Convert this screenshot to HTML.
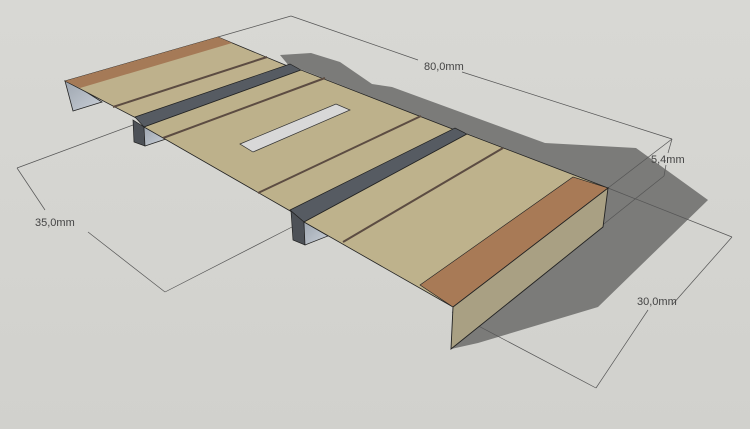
<!DOCTYPE html>
<html><head><meta charset="utf-8"><style>
html,body{margin:0;padding:0;width:750px;height:429px;overflow:hidden;background:#d5d5d1}
text{font-family:"Liberation Sans",sans-serif;font-size:11px;fill:#444}
</style></head><body>
<svg width="750" height="429" viewBox="0 0 750 429" xmlns="http://www.w3.org/2000/svg">
<defs>
<linearGradient id="bg" x1="0" y1="0" x2="0" y2="1"><stop offset="0" stop-color="#d8d8d4"/><stop offset="1" stop-color="#d1d1cd"/></linearGradient>
<linearGradient id="flap" x1="0" y1="0" x2="1" y2="1"><stop offset="0" stop-color="#9ea6b0"/><stop offset="1" stop-color="#c8ced6"/></linearGradient>
</defs>
<rect width="750" height="429" fill="url(#bg)"/>
<polygon fill="#7b7b79" points="280,55 311,53 340,62 372,84 392,87 545,143 636,148 708,200 598,307 478,343 451,349 603,227 608,188 466,133 455,130 300,69 290,67"/>
<g stroke="#555" stroke-width="0.7" fill="none">
<line x1="218" y1="37" x2="291" y2="16"/>
<line x1="291" y1="16" x2="418" y2="60"/><line x1="462" y1="72" x2="672" y2="139"/>
<line x1="608" y1="188" x2="672" y2="139"/>
<line x1="672" y1="139" x2="668" y2="153"/><line x1="666" y1="165" x2="664" y2="176"/>
<line x1="600" y1="227" x2="664" y2="176"/>
<line x1="608" y1="188" x2="732" y2="237"/>
<line x1="732" y1="237" x2="672" y2="305"/><line x1="648" y1="310" x2="596" y2="388"/>
<line x1="452" y1="312" x2="596" y2="388"/>
<line x1="17" y1="168" x2="133" y2="125"/>
<line x1="17" y1="168" x2="45" y2="210"/><line x1="88" y1="232" x2="165" y2="292"/>
<line x1="165" y1="292" x2="292" y2="227"/>
</g>
<text x="424" y="70">80,0mm</text>
<text x="651" y="163">5,4mm</text>
<text x="35" y="226">35,0mm</text>
<text x="637" y="305">30,0mm</text>
<polygon fill="url(#flap)" stroke="#222" stroke-width="0.8" points="65,81 80,88 102,102 73,111"/>
<polygon fill="#beb18c" stroke="#222" stroke-width="0.8" points="65,81 218,37 290,67 138,119"/>
<polygon fill="#a57a57" points="65,81 218,37 232,43 80,88"/>
<line x1="113" y1="107" x2="267" y2="57" stroke="#5c4c42" stroke-width="2"/>
<polygon fill="#565b62" stroke="#222" stroke-width="0.7" points="135,117 290,64 301,70 144,127"/>
<polygon fill="#4d5157" stroke="#222" stroke-width="0.7" points="133,120 144,127 145,146 134,142"/>
<polygon fill="url(#flap)" stroke="#222" stroke-width="0.7" points="144,127 166,139 145,146"/>
<polygon fill="#bdb18b" stroke="#222" stroke-width="0.8" points="144,127 301,70 455,130 292,212"/>
<line x1="163" y1="138" x2="325" y2="78" stroke="#5c4c42" stroke-width="2"/>
<line x1="258" y1="193" x2="421" y2="116" stroke="#5c4c42" stroke-width="2"/>
<polygon fill="#d8d8d8" stroke="#333" stroke-width="0.7" points="240,144 336,104 350,110 253,152"/>
<polygon fill="#565b62" stroke="#222" stroke-width="0.7" points="290,210 455,128 467,134 304,222"/>
<polygon fill="#4d5157" stroke="#222" stroke-width="0.7" points="291,211 304,222 305,245 293,240"/>
<polygon fill="url(#flap)" stroke="#222" stroke-width="0.7" points="304,222 328,236 305,245"/>
<polygon fill="#beb28c" stroke="#222" stroke-width="0.8" points="304,222 467,134 608,188 453,307"/>
<polygon fill="#a87a56" stroke="#222" stroke-width="0.6" points="420,285 573,177 608,188 453,307"/>
<line x1="343" y1="242" x2="503" y2="148" stroke="#5c4c42" stroke-width="2"/>
<polygon fill="#a9a083" stroke="#222" stroke-width="0.9" points="453,307 608,188 603,227 451,349"/>
</svg>
</body></html>
